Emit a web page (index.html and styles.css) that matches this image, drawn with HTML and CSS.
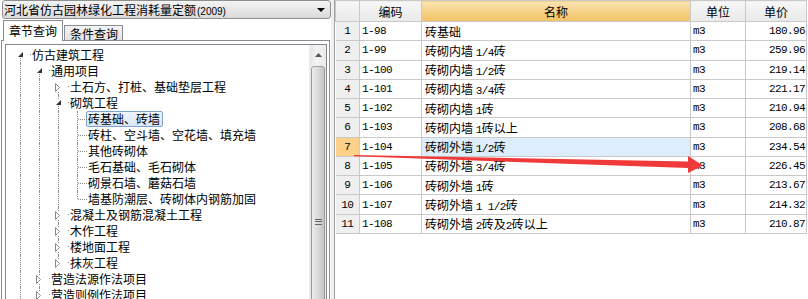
FILE: index.html
```html
<!DOCTYPE html>
<html lang="zh-CN">
<head>
  <meta charset="UTF-8">
  <title>定额查询</title>
  <link rel="stylesheet" href="styles.css">
</head>
<body>
  <div class="app">
    <div class="left">
      <div class="combo">
        <span>河北省仿古园林绿化工程消耗量定额<small>(2009)</small></span>
        <span class="combo-arrow"></span>
      </div>
      <div class="tabs">
        <div class="tab active">章节查询</div>
        <div class="tab">条件查询</div>
      </div>
      <div class="tabpanel">
        <div class="tree">
          <div class="rows">
            <div class="row"><i class="t dn"><svg width="7" height="7"><path d="M6 1V6H1Z" fill="#333"/></svg></i><span class="lbl">仿古建筑工程</span></div>
            <div class="row"><i class="g v"></i><i class="t dn"><svg width="7" height="7"><path d="M6 1V6H1Z" fill="#333"/></svg></i><span class="lbl">通用项目</span></div>
            <div class="row"><i class="g v"></i><i class="g v"></i><i class="t dn"><svg width="6" height="9"><path d="M0.5 0.5L4.5 4.5L0.5 8.5Z" fill="#fff" stroke="#8a8a8a"/></svg></i><span class="lbl">土石方、打桩、基础垫层工程</span></div>
            <div class="row"><i class="g v"></i><i class="g v"></i><i class="t up dn"><svg width="7" height="7"><path d="M6 1V6H1Z" fill="#333"/></svg></i><span class="lbl">砌筑工程</span></div>
            <div class="row"><i class="g v"></i><i class="g v"></i><i class="g v"></i><i class="c v"></i><span class="lbl sel">砖基础、砖墙</span></div>
            <div class="row"><i class="g v"></i><i class="g v"></i><i class="g v"></i><i class="c v"></i><span class="lbl">砖柱、空斗墙、空花墙、填充墙</span></div>
            <div class="row"><i class="g v"></i><i class="g v"></i><i class="g v"></i><i class="c v"></i><span class="lbl">其他砖砌体</span></div>
            <div class="row"><i class="g v"></i><i class="g v"></i><i class="g v"></i><i class="c v"></i><span class="lbl">毛石基础、毛石砌体</span></div>
            <div class="row"><i class="g v"></i><i class="g v"></i><i class="g v"></i><i class="c v"></i><span class="lbl">砌景石墙、蘑菇石墙</span></div>
            <div class="row"><i class="g v"></i><i class="g v"></i><i class="g v"></i><i class="c up"></i><span class="lbl">墙基防潮层、砖砌体内钢筋加固</span></div>
            <div class="row"><i class="g v"></i><i class="g v"></i><i class="t up dn"><svg width="6" height="9"><path d="M0.5 0.5L4.5 4.5L0.5 8.5Z" fill="#fff" stroke="#8a8a8a"/></svg></i><span class="lbl">混凝土及钢筋混凝土工程</span></div>
            <div class="row"><i class="g v"></i><i class="g v"></i><i class="t up dn"><svg width="6" height="9"><path d="M0.5 0.5L4.5 4.5L0.5 8.5Z" fill="#fff" stroke="#8a8a8a"/></svg></i><span class="lbl">木作工程</span></div>
            <div class="row"><i class="g v"></i><i class="g v"></i><i class="t up dn"><svg width="6" height="9"><path d="M0.5 0.5L4.5 4.5L0.5 8.5Z" fill="#fff" stroke="#8a8a8a"/></svg></i><span class="lbl">楼地面工程</span></div>
            <div class="row"><i class="g v"></i><i class="g v"></i><i class="t up"><svg width="6" height="9"><path d="M0.5 0.5L4.5 4.5L0.5 8.5Z" fill="#fff" stroke="#8a8a8a"/></svg></i><span class="lbl">抹灰工程</span></div>
            <div class="row"><i class="g v"></i><i class="t up dn"><svg width="6" height="9"><path d="M0.5 0.5L4.5 4.5L0.5 8.5Z" fill="#fff" stroke="#8a8a8a"/></svg></i><span class="lbl">营造法源作法项目</span></div>
            <div class="row"><i class="g v"></i><i class="t up dn"><svg width="6" height="9"><path d="M0.5 0.5L4.5 4.5L0.5 8.5Z" fill="#fff" stroke="#8a8a8a"/></svg></i><span class="lbl">营造则例作法项目</span></div>
          </div>
          <div class="vscroll">
            <div class="sb-up"><svg width="7" height="4"><path d="M0 4L3.5 0L7 4Z" fill="#555"/></svg></div>
            <div class="sb-thumb"><span class="grip"></span></div>
          </div>
        </div>
      </div>
    </div>
    <div class="split"></div>
    <div class="right">
      <table class="grid">
        <colgroup>
          <col class="c-no"><col class="c-code"><col class="c-name"><col class="c-unit"><col class="c-price">
        </colgroup>
        <thead>
          <tr><th></th><th>编码</th><th class="sorted">名称</th><th>单位</th><th>单价</th></tr>
        </thead>
        <tbody>
          <tr><td class="no">1</td><td>1-98</td><td class="name">砖基础</td><td>m3</td><td class="num">180.96</td></tr>
          <tr><td class="no">2</td><td>1-99</td><td class="name">砖砌内墙 <span class="n">1/4</span>砖</td><td>m3</td><td class="num">259.96</td></tr>
          <tr><td class="no">3</td><td>1-100</td><td class="name">砖砌内墙 <span class="n">1/2</span>砖</td><td>m3</td><td class="num">219.14</td></tr>
          <tr><td class="no">4</td><td>1-101</td><td class="name">砖砌内墙 <span class="n">3/4</span>砖</td><td>m3</td><td class="num">221.17</td></tr>
          <tr><td class="no">5</td><td>1-102</td><td class="name">砖砌内墙 <span class="n">1</span>砖</td><td>m3</td><td class="num">210.94</td></tr>
          <tr><td class="no">6</td><td>1-103</td><td class="name">砖砌内墙 <span class="n">1</span>砖以上</td><td>m3</td><td class="num">208.68</td></tr>
          <tr class="current"><td class="no">7</td><td>1-104</td><td class="name">砖砌外墙 <span class="n">1/2</span>砖</td><td>m3</td><td class="num">234.54</td></tr>
          <tr><td class="no">8</td><td>1-105</td><td class="name">砖砌外墙 <span class="n">3/4</span>砖</td><td>m3</td><td class="num">226.45</td></tr>
          <tr><td class="no">9</td><td>1-106</td><td class="name">砖砌外墙 <span class="n">1</span>砖</td><td>m3</td><td class="num">213.67</td></tr>
          <tr><td class="no">10</td><td>1-107</td><td class="name">砖砌外墙 <span class="n">1 1/2</span>砖</td><td>m3</td><td class="num">214.32</td></tr>
          <tr><td class="no">11</td><td>1-108</td><td class="name">砖砌外墙 <span class="n">2</span>砖及<span class="n">2</span>砖以上</td><td>m3</td><td class="num">210.87</td></tr>
        </tbody>
      </table>
    </div>
  </div>

  <!-- red annotation arrow drawn over the grid -->
  <svg class="arrow" width="808" height="299">
    <path d="M354 155L688 161.5L688 156L703 165.5L688 173L688 168L354 156.3Z" fill="#f03a3a"/>
  </svg>
</body>
</html>
```

FILE: styles.css
```css
* {
  box-sizing: border-box;
}
body {
  margin: 0;
  width: 808px;
  height: 299px;
  overflow: hidden;
  position: relative;
  background: #fff;
  color: #000;
  font: 12px "Noto Sans CJK SC", sans-serif;
}
.app {
  display: flex;
  height: 299px;
}
.left {
  width: 331px;
  flex: none;
}
.combo {
  margin-left: 2px;
  height: 19px;
  border: 1px solid #8e8f8f;
  border-radius: 3px;
  background: linear-gradient(#f4f4f4, #dadada);
  display: flex;
  align-items: center;
  justify-content: space-between;
  padding: 0 5px 0 1px;
  line-height: 17px;
}
.combo small {
  font: 10px "Liberation Sans", sans-serif;
  margin-left: 1px;
}
.combo-arrow {
  width: 0;
  height: 0;
  border-left: 4px solid transparent;
  border-right: 4px solid transparent;
  border-top: 4px solid #000;
}
.tabs {
  display: flex;
  align-items: flex-end;
  height: 21px;
  padding-left: 3px;
}
.tab {
  height: 15px;
  padding: 0 4px 0 5px;
  line-height: 15px;
  border: 1px solid #898c95;
  border-bottom: none;
  background: linear-gradient(#f3f3f3, #e3e3e3);
  margin-left: 1px;
}
.tab.active {
  height: 21px;
  line-height: 19px;
  margin: 0 0 -1px;
  padding: 0 5px;
  background: #fff;
  position: relative;
  z-index: 1;
}
.tabpanel {
  margin-left: 1px;
  width: 329px;
  height: 280px;
  border: 1px solid #898c95;
  padding: 3px 2px 0 3px;
}
.tree {
  display: flex;
  height: 300px;
  border: 1px solid #828790;
  background: #fff;
}
.rows {
  flex: 1;
  padding: 2px 0 0 5px;
}
.row {
  display: flex;
  height: 16px;
  line-height: 16px;
  white-space: nowrap;
}
.row i {
  flex: none;
  width: 19px;
  height: 16px;
  position: relative;
}
.g.v::before,
.c.v::before,
.t.up::before,
.t.dn::after,
.c.up::before {
  content: "";
  position: absolute;
  left: 9px;
  border-left: 1px dotted #8c8c8c;
}
.g.v::before,
.c.v::before {
  top: 0;
  bottom: 0;
}
.t.up::before,
.c.up::before {
  top: 0;
  height: 8px;
}
.t.dn::after {
  top: 8px;
  bottom: 0;
}
.c::after {
  content: "";
  position: absolute;
  left: 10px;
  right: 0;
  top: 8px;
  border-top: 1px dotted #8c8c8c;
}
.t svg {
  position: absolute;
  left: 6px;
  top: 4px;
  background: #fff;
  z-index: 1;
}
.t + .lbl {
  margin-left: 2px;
}
.t + .lbl::before {
  content: "";
  display: inline-block;
  width: 1px;
  height: 1px;
  background: #8c8c8c;
  margin: 0 1px 4px -3px;
  vertical-align: middle;
}
.lbl {
  padding: 0 2px 0 1px;
}
.lbl.sel {
  margin-left: -1px;
  border: 1px solid #7da2ce;
  border-radius: 2px;
  background: linear-gradient(#eef5fd, #d7e7fb);
  line-height: 14px;
}
.vscroll {
  width: 17px;
  flex: none;
  background: linear-gradient(90deg, #e6e6e6, #f2f2f2 40%, #e9e9e9);
  border-left: 1px solid #ececec;
  padding: 0 1px;
}
.sb-up {
  height: 20px;
  display: flex;
  justify-content: center;
  padding-top: 8px;
}
.sb-thumb {
  height: 280px;
  margin-top: 1px;
  border: 1px solid #9c9c9c;
  border-radius: 3px 3px 0 0;
  background: linear-gradient(90deg, #ececec, #dcdcdc 45%, #c4c4c4);
  padding-top: 152px;
  display: flex;
  justify-content: center;
}
.grip {
  width: 7px;
  height: 6px;
  border-top: 1px solid #666;
  border-bottom: 1px solid #666;
  position: relative;
}
.grip::after {
  content: "";
  position: absolute;
  left: 0;
  right: 0;
  top: 1px;
  border-top: 1px solid #666;
  border-bottom: 1px solid #666;
  height: 2px;
}
.split {
  width: 3px;
  flex: none;
  background: #f0f0f0;
}
.right {
  flex: 1;
  border-left: 1px solid #a0a0a0;
  background: #fff;
}
.grid {
  border-collapse: collapse;
  table-layout: fixed;
  width: 471px;
}
.c-no { width: 24px; }
.c-code { width: 62px; }
.c-name { width: 269px; }
.c-unit { width: 55px; }
.c-price { width: 61px; }
.grid th,
.grid td {
  border: 1px solid #c9c9c9;
  padding: 0 2px;
  white-space: nowrap;
  overflow: hidden;
}
.grid th {
  height: 21px;
  font-weight: normal;
  background: linear-gradient(#f7f7f7, #e9e9e9);
  text-align: center;
}
.grid th.sorted {
  background: linear-gradient(#fbe3b0, #f2c264);
}
.grid td {
  height: 19.27px;
  line-height: 16px;
  font: 11px "Liberation Mono", "Noto Sans CJK SC", monospace;
  letter-spacing: -0.6px;
}
.grid td:first-child {
  border-left: none;
}
.grid td.name {
  font: 12px "Noto Sans CJK SC", sans-serif;
  letter-spacing: 0;
  padding-left: 3px;
}
.grid td.name .n {
  font: 11px "Liberation Mono", monospace;
  letter-spacing: -0.6px;
}
.grid td.no {
  background: #efefef;
  text-align: center;
  padding: 0;
}
.grid td.num {
  text-align: right;
  padding-right: 1px;
}
.current td.no {
  background: #fcd28b;
}
.current td.name {
  background: #deedfc;
}
.arrow {
  position: absolute;
  left: 0;
  top: 0;
  pointer-events: none;
}
```
